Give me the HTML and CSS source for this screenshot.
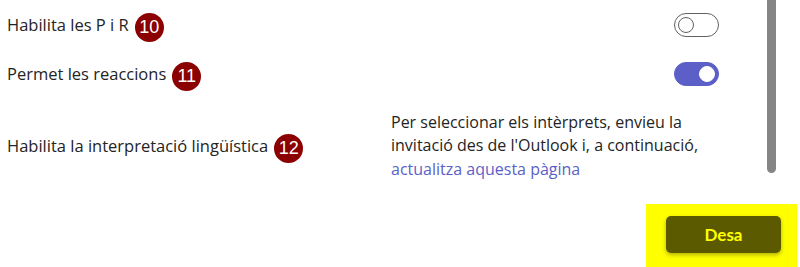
FILE: index.html
```html
<!DOCTYPE html>
<html lang="ca">
<head>
<meta charset="utf-8">
<title>Opcions de la reunió</title>
<link rel="stylesheet" href="styles.css">
</head>
<body>
<div class="page">
  <div class="top">
    <div class="main">
      <div class="row row-1">
        <div class="label"><span class="label-text">Habilita les P i R</span><span class="badge">10</span></div>
        <div class="control"><span class="toggle"><span class="knob"></span></span></div>
      </div>
      <div class="row row-2">
        <div class="label"><span class="label-text">Permet les reaccions</span><span class="badge">11</span></div>
        <div class="control"><span class="toggle toggle-on"><span class="knob"></span></span></div>
      </div>
      <div class="row row-3">
        <div class="label"><span class="label-text">Habilita la interpretació lingüística</span><span class="badge">12</span></div>
        <p class="note">Per seleccionar els intèrprets, envieu la<br>invitació des de l'Outlook i, a continuació,<br><a class="link" href="#">actualitza aquesta pàgina</a></p>
      </div>
    </div>
    <div class="scrollbar"></div>
  </div>
  <div class="footer">
    <div class="highlight"><button class="save" type="button">Desa</button></div>
  </div>
</div>
</body>
</html>
```
FILE: styles.css
```css
* { box-sizing: border-box; }
html, body { margin: 0; padding: 0; background: #ffffff; }
body {
  font-family: "Open Sans", "Noto Sans", "Liberation Sans", sans-serif;
  font-size: 16px;
  color: #242424;
  width: 800px;
  height: 267px;
  overflow: hidden;
}
.page { display: flex; flex-direction: column; height: 267px; }
.top { display: flex; height: 204px; }
.main { width: 767px; padding: 0 48px 0 7px; }
.row {
  display: grid;
  grid-template-columns: 384px 1fr;
  align-items: center;
}
.row-1 { height: 50px; }
.row-2 { height: 48px; }
.row-3 { height: 96px; }
.label { display: flex; align-items: center; line-height: 24px; font-size: 16.5px; }
.badge {
  display: inline-flex;
  align-items: center;
  justify-content: center;
  width: 29px;
  height: 29px;
  margin-left: 6px;
  margin-top: 4px;
  border-radius: 50%;
  background: #8b0000;
  color: #ffffff;
  font-family: "Liberation Sans", Arial, sans-serif;
  font-size: 18px;
}
.control { display: flex; justify-content: flex-end; }
.toggle {
  position: relative;
  display: block;
  width: 45px;
  height: 24px;
  border: 1px solid #616161;
  border-radius: 12px;
  background: #ffffff;
}
.toggle .knob {
  position: absolute;
  top: 3px;
  left: 3px;
  width: 16px;
  height: 16px;
  border: 1px solid #616161;
  border-radius: 50%;
  background: #ffffff;
}
.toggle-on { background: #5b5fc7; border-color: #5b5fc7; }
.toggle-on .knob { left: 24px; border-color: #ffffff; }
.note { margin: 0; line-height: 23.5px; color: #242424; }
.link { color: #5b5fc7; text-decoration: none; }
.scrollbar {
  width: 9px;
  height: 173px;
  background: #858585;
  border-radius: 0 0 5px 5px;
}
.footer { display: flex; justify-content: flex-end; padding-right: 3px; }
.highlight {
  background: #ffff00;
  padding: 12px 16px 14px 20px;
}
.save {
  display: block;
  width: 115px;
  height: 37px;
  border: none;
  border-radius: 5px;
  background: #5c5a00;
  color: #ffff00;
  font-family: "Lato", "Open Sans", sans-serif;
  font-weight: 700;
  font-size: 17px;
  box-shadow: 0 2px 4px rgba(0, 0, 0, 0.3);
}
```
